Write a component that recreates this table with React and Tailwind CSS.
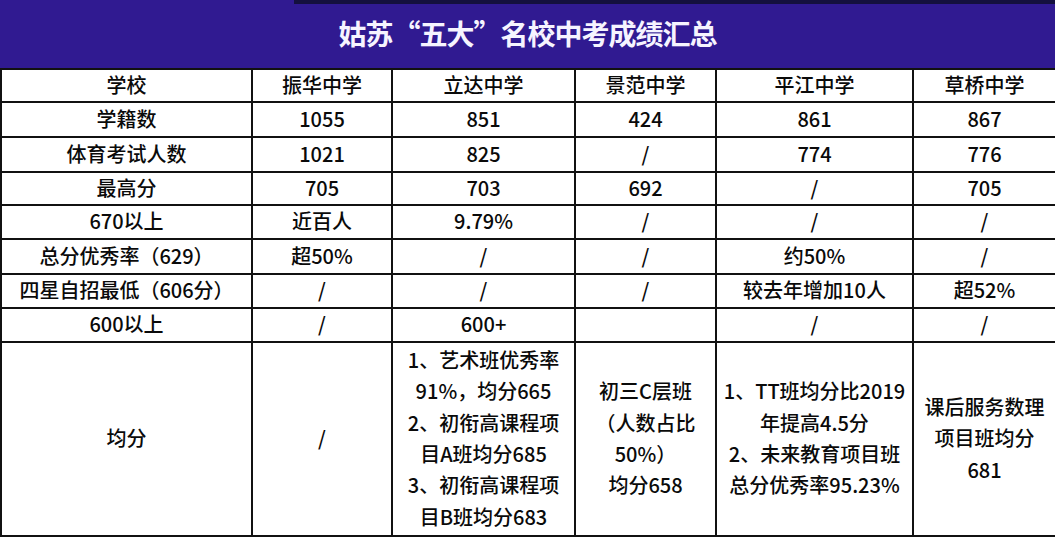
import React from "react";

const rows = [
  { h: "h-[35px]", cells: ["学籍数", "1055", "851", "424", "861", "867"] },
  { h: "h-[35px]", cells: ["体育考试人数", "1021", "825", "/", "774", "776"] },
  { h: "h-[33px]", cells: ["最高分", "705", "703", "692", "/", "705"] },
  { h: "h-[34px]", cells: ["670以上", "近百人", "9.79%", "/", "/", "/"] },
  { h: "h-[35px]", cells: ["总分优秀率（629）", "超50%", "/", "/", "约50%", "/"] },
  { h: "h-[34px]", cells: ["四星自招最低（606分）", "/", "/", "/", "较去年增加10人", "超52%"] },
  { h: "h-[34px]", cells: ["600以上", "/", "600+", "", "/", "/"] },
];

const lines = (arr) =>
  arr.map((t, i) => (
    <div key={i} className="whitespace-nowrap">
      {t}
    </div>
  ));

const cell = "border-2 border-[#111] text-center align-middle p-0 pb-[2px]";

export default function App() {
  return (
    <div
      className="w-[1055px] h-[537px] overflow-hidden bg-white text-[#0a0a0a] font-medium"
      style={{ fontFamily: '"Noto Sans CJK SC", "Microsoft YaHei", sans-serif' }}
    >
      <div className="h-[68px] flex flex-col bg-[#301a91]">
        <div className="h-[4px] flex">
          <div className="w-[294px] bg-[#301a91]" />
          <div className="flex-1 bg-[#14103e]" />
        </div>
        <div className="flex-1 flex items-center justify-center pb-[6px]">
          <h1 className="text-[28px] font-bold text-[#f6f4ff] tracking-[-1px]">
            姑苏“五大”名校中考成绩汇总
          </h1>
        </div>
      </div>
      <table className="table-fixed border-collapse w-[1055px] text-[20px] leading-none">
        <colgroup>
          <col className="w-[251px]" />
          <col className="w-[140px]" />
          <col className="w-[183px]" />
          <col className="w-[141px]" />
          <col className="w-[197px]" />
          <col className="w-[143px]" />
        </colgroup>
        <tbody>
          <tr className="h-[33px]">
            {["学校", "振华中学", "立达中学", "景范中学", "平江中学", "草桥中学"].map((c) => (
              <td key={c} className={cell}>
                {c}
              </td>
            ))}
          </tr>
          {rows.map((r) => (
            <tr key={r.cells[0]} className={r.h}>
              {r.cells.map((c, i) => (
                <td key={i} className={cell}>
                  {c}
                </td>
              ))}
            </tr>
          ))}
          <tr className="h-[194px] leading-[31.3px]">
            <td className={cell}>均分</td>
            <td className={cell}>/</td>
            <td className={cell}>
              {lines([
                "1、艺术班优秀率",
                "91%，均分665",
                "2、初衔高课程项",
                "目A班均分685",
                "3、初衔高课程项",
                "目B班均分683",
              ])}
            </td>
            <td className={cell}>
              {lines(["初三C层班", "（人数占比", "50%）", "均分658"])}
            </td>
            <td className={cell}>
              {lines(["1、TT班均分比2019", "年提高4.5分", "2、未来教育项目班", "总分优秀率95.23%"])}
            </td>
            <td className={cell}>
              {lines(["课后服务数理", "项目班均分", "681"])}
            </td>
          </tr>
        </tbody>
      </table>
    </div>
  );
}
